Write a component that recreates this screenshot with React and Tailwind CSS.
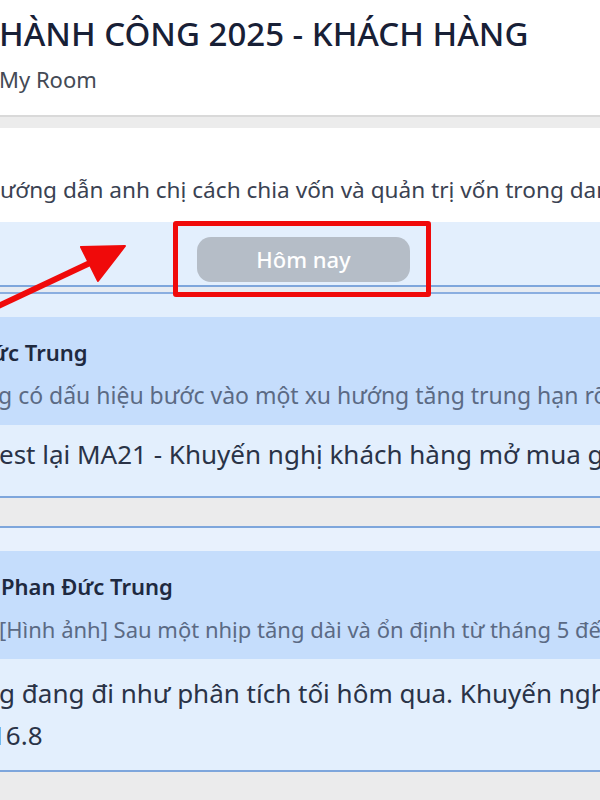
export default function App() {
  return (
    <div className="relative w-[600px] h-[800px] overflow-hidden bg-white font-['Noto_Sans',sans-serif]">
      {/* Header */}
      <div className="h-[115px] bg-white pt-[14px]">
        <div className="whitespace-nowrap text-[33px] leading-[40px] font-medium text-[#182036] ml-[-1px]">
          HÀNH CÔNG 2025 - KHÁCH HÀNG
        </div>
        <div className="whitespace-nowrap text-[22px] leading-[28px] mt-[11px] text-[#444a55] ml-[-1px]">My Room</div>
      </div>
      <div className="h-[13px] border-t-2 border-[#d9d9d9] bg-[#ececec]" />

      {/* Description */}
      <div className="h-[94px] flex items-end pb-[18px]">
        <div className="whitespace-nowrap text-[22.6px] leading-[28px] text-[#3a4252]">
          ướng dẫn anh chị cách chia vốn và quản trị vốn trong danh mục
        </div>
      </div>

      {/* Date divider */}
      <div className="h-[63px] bg-[#e3effd] flex justify-center items-start pt-[15px]">
        <button className="ml-[7px] w-[213px] h-[45px] rounded-[14px] bg-[#b5bdc7] text-white text-[22px] font-medium">
          Hôm nay
        </button>
      </div>

      {/* Card 1 */}
      <div className="border-t-2 border-[#7ea6dc] h-[7px] bg-[#e6ebf2]" />
      <div className="border-t-2 border-[#8aaee0] bg-[#e3effd] pt-[23px] border-b-2 border-b-[#7ea6dc]">
        <div className="bg-[#c5ddfc] h-[108px] pt-[22px]">
          <div className="whitespace-nowrap text-[22px] leading-[26px] font-semibold text-[#1e2940] ml-[-8px]">ức Trung</div>
          <div className="whitespace-nowrap text-[23px] leading-[26px] mt-[17px] text-[#5b6a84] ml-[-2px]">
            g có dấu hiệu bước vào một xu hướng tăng trung hạn rõ ràng
          </div>
        </div>
        <div className="h-[71px] pt-[13px]">
          <div className="whitespace-nowrap text-[26px] leading-[32px] text-[#2a3347] ml-[-1px]">
            est lại MA21 - Khuyến nghị khách hàng mở mua gom
          </div>
        </div>
      </div>

      <div className="h-[30px] bg-[#ebebec] border-b-2 border-[#7ea6dc]" />

      {/* Card 2 */}
      <div className="bg-[#e8f1fd] pt-[23px] border-b-2 border-[#7ea6dc]">
        <div className="bg-[#c5ddfc] h-[108px] pt-[22px]">
          <div className="whitespace-nowrap text-[22px] leading-[26px] font-semibold text-[#1e2940] pl-[1px]">
            Phan Đức Trung
          </div>
          <div className="whitespace-nowrap text-[22px] leading-[26px] mt-[17px] text-[#5b6a84] ml-[-1px]">
            [Hình ảnh] Sau một nhịp tăng dài và ổn định từ tháng 5 đến nay
          </div>
        </div>
        <div className="h-[111px] pt-[13px] bg-[#e3effd]">
          <div className="whitespace-nowrap text-[26px] leading-[42px] text-[#2a3347] ml-[-1px]">
            g đang đi như phân tích tối hôm qua. Khuyến nghị
          </div>
          <div className="whitespace-nowrap text-[26px] leading-[42px] text-[#2a3347] ml-[-9px]">16.8</div>
        </div>
      </div>
      <div className="h-[30px] bg-[#ebebec]" />

      {/* Red highlight box */}
      <div className="absolute left-[173px] top-[221px] w-[258px] h-[76px] border-[5px] border-[#f00a0a] rounded-[3px]" />

      {/* Red arrow */}
      <svg className="absolute left-0 top-[230px]" width="140" height="90" viewBox="0 230 140 90">
        <line x1="-10" y1="310" x2="92" y2="262" stroke="#f00a0a" strokeWidth="6" />
        <polygon points="81,247 125,246 98,281" fill="#f00a0a" stroke="#f00a0a" strokeWidth="2" strokeLinejoin="round" />
      </svg>
    </div>
  );
}
